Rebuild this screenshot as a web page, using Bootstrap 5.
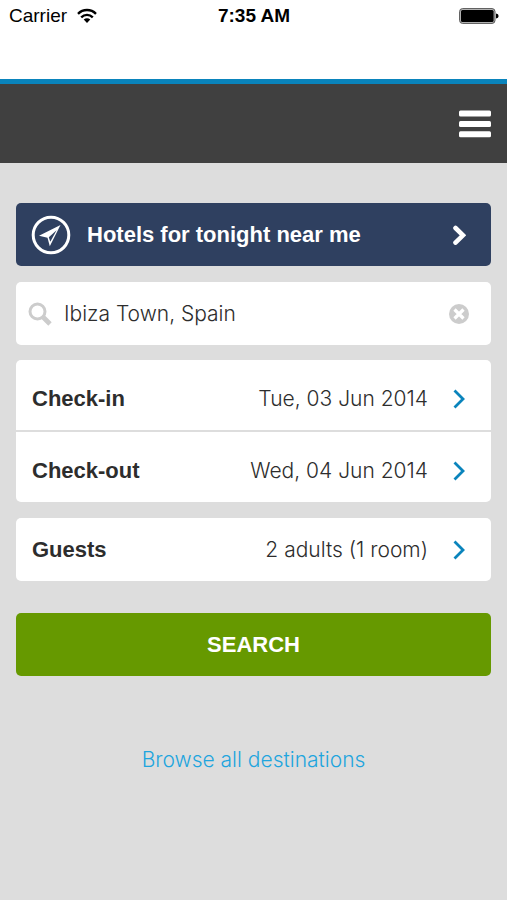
<!DOCTYPE html>
<html lang="en">
<head>
<meta charset="utf-8">
<meta name="viewport" content="width=device-width, initial-scale=1">
<title>Hotel search</title>
<link href="https://cdn.jsdelivr.net/npm/bootstrap@5.3.0/dist/css/bootstrap.min.css" rel="stylesheet">
<style>
body { background: #ddd; color: #2d2d2d; font-family: "Liberation Sans", Arial, sans-serif; font-size: 22px; line-height: 28px; }
.status-bar { height: 79px; padding: 4px 8px 0 9px; color: #000; font-size: 19px; line-height: 24px; }
.carrier { gap: 10px; }
.site-bar { height: 84px; background: #404040; border-top: 5px solid #0a84bc; }
.page-body { padding-top: 40px; }
.field-row { min-height: 63px; padding: 0 25px 0 16px; border: 0; background: transparent; color: inherit; text-align: left; }
.panel { background: #fff; color: #2d2d2d; border: 0; border-radius: 5px; }
.date-row { min-height: 70px; padding-top: 8px; }
.date-row + .date-row { min-height: 72px; border-top: 2px solid #ddd; }
.thin-text, .thin-text:focus { font-family: Inter, "Liberation Sans", sans-serif; font-size: 21px; line-height: 28px; font-weight: 300; color: #2d2d2d; }
.near-btn { background: #2f4060; color: #fff; border-radius: 5px; padding-left: 15px; }
.place-row { padding-left: 12px; padding-right: 22px; margin-bottom: 15px; }
.place-input, .place-input:focus { background: transparent; border: 0; box-shadow: none; min-width: 0; }
.search-btn, .search-btn:hover { min-height: 63px; margin-top: 32px; background: #690; color: #fff; border: 0; border-radius: 5px; font-size: 22px; line-height: 28px; }
.browse-link { margin-top: 70px; }
.browse-link.thin-text { color: #1fa5de; }
svg { display: block; flex: none; }
</style>
<script src="https://cdn.jsdelivr.net/npm/bootstrap@5.3.0/dist/js/bootstrap.bundle.min.js"></script>
</head>
<body>
<div class="status-bar bg-white d-flex align-items-start">
  <div class="col d-flex align-items-center carrier">
    <span>Carrier</span>
    <svg width="20" height="16" viewBox="0 0 20 16" aria-hidden="true"><g fill="none" stroke="#000" stroke-width="2.4"><path d="M1 5.8C6 .8 14 .8 19 5.8"/><path d="M4.2 9.3C7.6 6 12.4 6 15.8 9.3"/></g><path d="M6.7 11.6c2-1.7 4.6-1.7 6.6 0L10 15z"/></svg>
  </div>
  <strong>7:35 AM</strong>
  <div class="col d-flex justify-content-end pt-1">
    <svg width="40" height="16" viewBox="0 0 40 16" aria-hidden="true"><rect x=".6" y=".6" width="35.4" height="14.8" rx="3" fill="#bbb" stroke="#555"/><rect x="2" y="2" width="32.6" height="12" rx="1.5"/><path d="M37 5.4q2.6.4 2.6 2.6T37 10.6z"/></svg>
  </div>
</div>
<nav class="site-bar d-flex align-items-center justify-content-end px-3" aria-label="Main">
  <button type="button" class="btn p-0 border-0" aria-label="Open menu">
    <svg width="32" height="28" viewBox="0 0 32 28" fill="#fff"><rect y=".5" width="32" height="6" rx="1.5"/><rect y="11" width="32" height="6" rx="1.5"/><rect y="21.3" width="32" height="6" rx="1.5"/></svg>
  </button>
</nav>
<main class="page-body px-3 d-flex flex-column">
  <button type="button" class="field-row near-btn d-flex align-items-center gap-3 w-100 fw-bold mb-3">
    <svg width="40" height="40" viewBox="0 0 40 40" aria-hidden="true"><circle cx="20" cy="20" r="17.8" fill="none" stroke="#fff" stroke-width="3"/><path d="M29.5 10 8 20.800l8.500 2 2.300 8.500z" fill="#fff"/><path d="M25.600 15.200 17.800 22.300l1.500 4.500z" fill="#2f4060"/></svg>
    <span class="flex-grow-1">Hotels for tonight near me</span>
    <svg width="14" height="20" viewBox="0 0 14 20" aria-hidden="true"><path d="M3.500 3 11 10.300 3.500 17.600" fill="none" stroke="#fff" stroke-width="4.600" stroke-linecap="round"/></svg>
  </button>
  <form class="d-flex flex-column">
    <div class="field-row panel place-row d-flex align-items-center">
      <svg width="24" height="24" viewBox="0 0 24 24" fill="none" stroke="#ccc" aria-hidden="true"><circle cx="9.500" cy="9.500" r="7.500" stroke-width="3"/><path d="m15 15 7 7" stroke-width="4.800"/></svg>
      <input class="form-control place-input thin-text flex-grow-1" type="text" aria-label="Destination" value="Ibiza Town, Spain">
      <button type="reset" class="btn p-0 border-0" aria-label="Clear destination"><svg width="20" height="20" viewBox="0 0 20 20"><circle cx="10" cy="10" r="10" fill="#ccc"/><path d="m5.500 5.500 9 9m0-9-9 9" stroke="#fff" stroke-width="3.200"/></svg></button>
    </div>
    <div class="panel mb-3">
      <button type="button" class="field-row date-row d-flex align-items-center w-100">
        <strong>Check-in</strong><span class="thin-text ms-auto me-4">Tue, 03 Jun 2014</span>
        <svg width="14" height="20" viewBox="0 0 14 20" aria-hidden="true"><path d="m2.500 1.500 8.500 8.500-8.500 8.500" fill="none" stroke="#0a84bc" stroke-width="2.800"/></svg>
      </button>
      <button type="button" class="field-row date-row d-flex align-items-center w-100">
        <strong>Check-out</strong><span class="thin-text ms-auto me-4">Wed, 04 Jun 2014</span>
        <svg width="14" height="20" viewBox="0 0 14 20" aria-hidden="true"><path d="m2.500 1.500 8.500 8.500-8.500 8.500" fill="none" stroke="#0a84bc" stroke-width="2.800"/></svg>
      </button>
    </div>
    <button type="button" class="field-row panel d-flex align-items-center w-100">
      <strong>Guests</strong><span class="thin-text ms-auto me-4">2 adults (1 room)</span>
      <svg width="14" height="20" viewBox="0 0 14 20" aria-hidden="true"><path d="m2.500 1.500 8.500 8.500-8.500 8.500" fill="none" stroke="#0a84bc" stroke-width="2.800"/></svg>
    </button>
    <button type="submit" class="btn search-btn fw-bold w-100">SEARCH</button>
  </form>
  <a href="#" class="browse-link thin-text text-decoration-none text-center">Browse all destinations</a>
</main>
</body>
</html>
